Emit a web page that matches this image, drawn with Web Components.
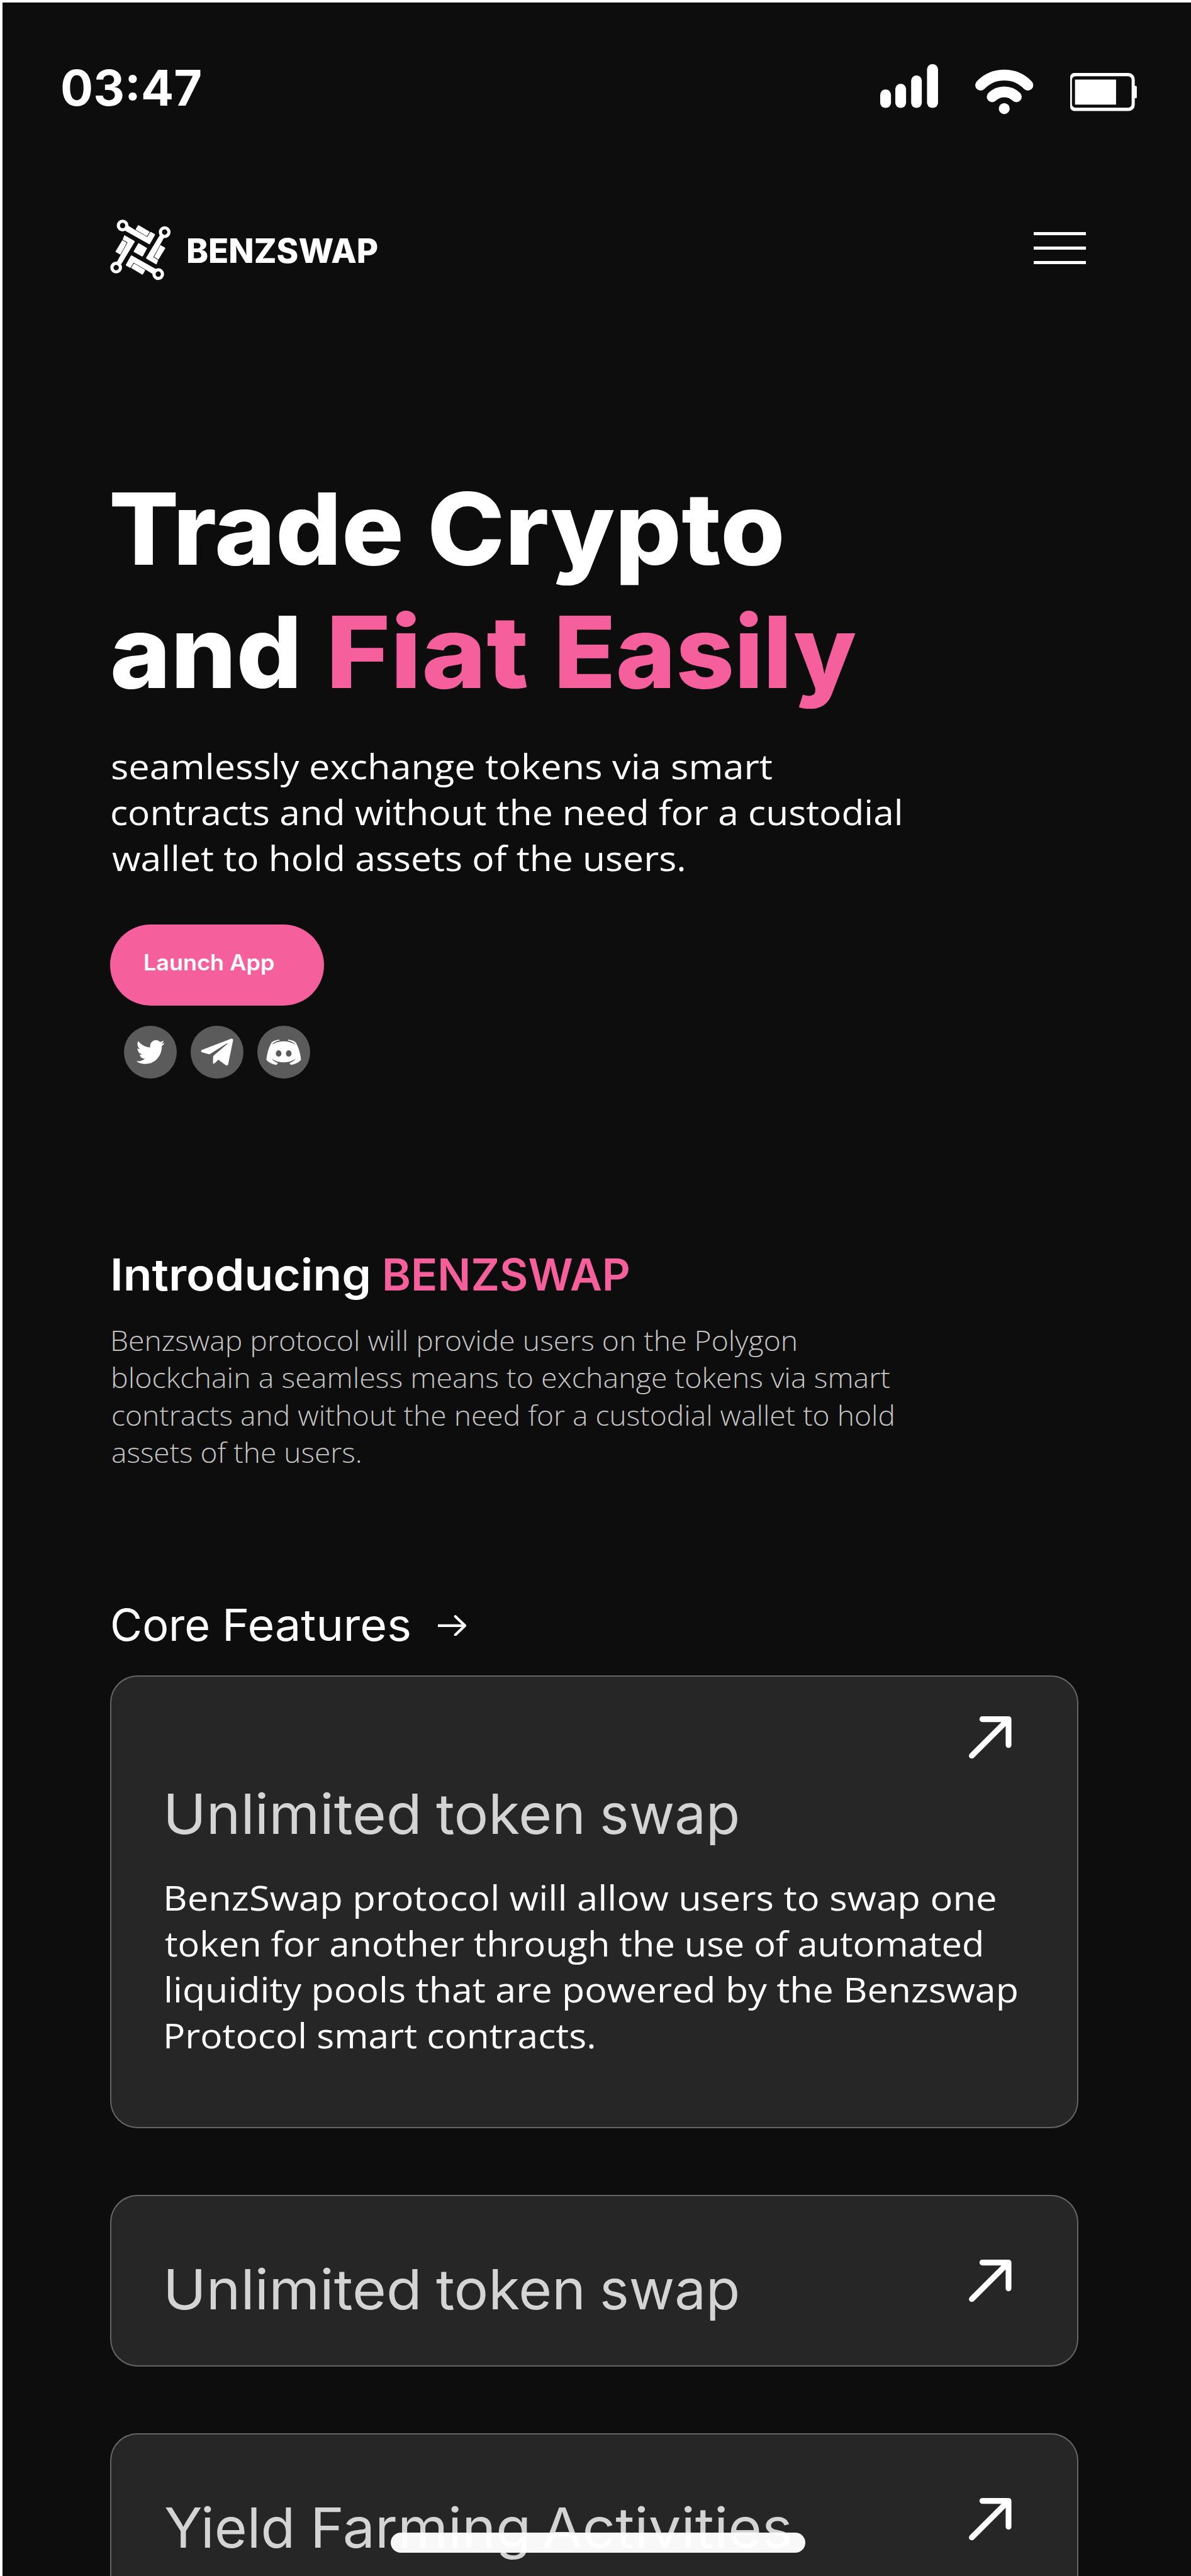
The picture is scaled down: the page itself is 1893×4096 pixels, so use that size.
<!DOCTYPE html>
<html lang="en">
<head>
<meta charset="utf-8">
<title>BENZSWAP</title>
<style>
html { font-size: 7.618px; }
body { margin: 0; background: #0d0d0d; font-family: Inter, "Liberation Sans", sans-serif; color: #fff; }
</style>
</head>
<body>
<benz-app></benz-app>
<script>
const define = (name, html, extra) => {
  const t = document.createElement('template');
  t.innerHTML = html;
  customElements.define(name, class extends HTMLElement {
    connectedCallback() {
      if (!this.shadowRoot) this.attachShadow({ mode: 'open' }).append(t.content.cloneNode(true));
      if (extra) extra(this);
    }
  });
};

/* One run of text whose visible width is given in rem by its "ink" attribute. */
const ctx = document.createElement('canvas').getContext('2d');
define('fit-text', `<style>
:host { display: inline-block; white-space: pre; flex: none; }
:host([line]) { display: block; }
span { display: inline-block; transform-origin: 0 50%; }
</style><span><slot></slot></span>`, el => {
  const cs = getComputedStyle(el), text = el.textContent;
  const rem = parseFloat(getComputedStyle(document.documentElement).fontSize);
  const width = parseFloat(el.getAttribute('ink')) * rem;
  ctx.font = `${cs.fontWeight} ${cs.fontSize} ${cs.fontFamily}`;
  const m = ctx.measureText(text);
  const ink = m.actualBoundingBoxLeft + m.actualBoundingBoxRight;
  const scale = width / ink;
  const span = el.shadowRoot.querySelector('span');
  span.style.transform = `scaleX(${scale})`;
  span.style.marginLeft = m.actualBoundingBoxLeft * scale + 'px';
  el.style.width = width + 'px';
});

define('status-icons', `<style>
:host { display: flex; align-items: flex-start; gap: 7.71rem; }
svg { display: block; overflow: visible; }
.signal { width: 12.07rem; height: 9.14rem; margin-top: .92rem; }
.wifi { width: 12.12rem; height: 9.25rem; margin-top: 2.07rem; }
.battery { width: 13.9rem; height: 7.95rem; margin-top: 2.7rem; }
</style>
<svg class="signal" viewBox="0 0 120.7 91.4" fill="#fff">
<rect x="0" y="53" width="22.5" height="38.4" rx="11"/><rect x="31.5" y="41" width="22.5" height="50.4" rx="11"/>
<rect x="64.6" y="23.6" width="22.2" height="67.8" rx="11"/><rect x="97.7" y="0" width="23" height="91.4" rx="11"/></svg>
<svg class="wifi" viewBox="0 0 121.2 92.5" fill="none" stroke="#fff" stroke-width="22.6" stroke-linecap="round">
<path d="M11.3 32A68.5 68.5 0 0 1 109.9 32M35.4 56.3A36.5 36.5 0 0 1 85.8 56.3"/><circle cx="60.6" cy="81" r="11.4" fill="#fff" stroke="none"/></svg>
<svg class="battery" viewBox="0 0 139 79.5" fill="#fff">
<path fill-rule="evenodd" d="M10 0H121.7A13 13 0 0 1 134.7 13V66.5A13 13 0 0 1 121.7 79.5H10A10 10 0 0 1 0 73V6.5A10 10 0 0 1 10 0ZM11 7A7.5 7.5 0 0 0 3.6 14.5V65A7.5 7.5 0 0 0 11 72.5H121A7.5 7.5 0 0 0 128.2 65V14.5A7.5 7.5 0 0 0 121 7Z"/>
<rect x="10" y="13.8" width="85.7" height="52.3"/><path d="M134 27h3a2 2 0 0 1 2 2v22a2 2 0 0 1-2 2h-3z"/></svg>`);

define('status-bar', `<style>
:host { display: flex; align-items: flex-start; justify-content: space-between; box-sizing: border-box; height: 45rem; padding: 12.48rem 11.3rem 0 12.97rem; }
fit-text { font-size: 10.2rem; line-height: 12rem; font-weight: 650; }
</style><fit-text ink="28.88">03:47</fit-text><status-icons></status-icons>`);

define('brand-logo', `<style>
:host { display: flex; align-items: flex-start; }
svg { display: block; width: 12.65rem; height: 12.67rem; margin-right: 3.65rem; overflow: visible; }
fit-text { font-size: 6.97rem; line-height: 8rem; font-weight: 800; margin-top: 2.7rem; }
</style>
<svg viewBox="76 84 320 380" preserveAspectRatio="none" fill="#fff">
<defs><g id="arms">
<path fill-rule="evenodd" d="M111 122a31 37 0 1 1 62 0a31 37 0 1 1-62 0M128 122a14 17 0 1 0 28 0a14 17 0 1 0-28 0"/>
<path d="M171 122L210 151L272 193L288 162L291 162L312 176L313 181L286 238L283 240L156 155Z"/>
<path d="M223 120L226 119L283 159L284 163L271 188L269 188L212 149L211 145Z"/>
<path fill-rule="evenodd" d="M333 163a31 37 0 1 1 62 0a31 37 0 1 1-62 0M350 163a14 17 0 1 0 28 0a14 17 0 1 0-28 0"/>
<path d="M337 184L266 324L267 329L318 365L321 365L330 338L304 320L361 197Z"/>
<path d="M341 245L344 245L366 260L367 265L332 333L330 334L308 318Z"/>
</g></defs>
<use href="#arms"/><use href="#arms" transform="rotate(180 236 274)"/>
<path d="M225 233L228 233L270 262L271 265L249 313L245 316L201 287L200 284Z"/></svg>
<fit-text ink="39.46">BENZSWAP</fit-text>`);

define('menu-button', `<style>
:host { display: flex; flex-direction: column; justify-content: space-between; width: 10.92rem; height: 6.65rem; }
i { display: block; height: 5px; background: #fff; }
</style><i></i><i></i><i></i>`);

define('site-header', `<style>
:host { display: flex; align-items: flex-start; justify-content: space-between; box-sizing: border-box; height: 50rem; padding: .8rem 21.96rem 0 23rem; }
menu-button { margin-top: 2.68rem; }
</style><brand-logo></brand-logo><menu-button></menu-button>`);

define('launch-button', `<style>
:host { display: block; box-sizing: border-box; width: 44.6rem; height: 16.9rem; border-radius: 8.45rem; background: #f5609c; padding: 5.25rem 0 0 7.18rem; }
fit-text { font-size: 4.62rem; line-height: 5.4rem; font-weight: 600; }
</style><fit-text ink="26.96">Launch App</fit-text>`);

define('social-links', `<style>
:host { display: flex; gap: 2.9rem; }
svg { display: block; width: 11rem; height: 11rem; border-radius: 50%; background: #5b5b5b; fill: #fff; }
</style>
<svg viewBox="132 782 247 330" preserveAspectRatio="none"><path transform="translate(190 872) scale(5.54 7.66) translate(0 -2.3)" d="M23.953 4.57a10 10 0 01-2.825.775 4.958 4.958 0 002.163-2.723c-.951.555-2.005.959-3.127 1.184a4.92 4.92 0 00-8.384 4.482C7.69 8.095 4.067 6.13 1.64 3.162a4.822 4.822 0 00-.666 2.475c0 1.71.87 3.213 2.188 4.096a4.904 4.904 0 01-2.228-.616v.06a4.923 4.923 0 003.946 4.827 4.996 4.996 0 01-2.212.085 4.936 4.936 0 004.604 3.417 9.867 9.867 0 01-6.102 2.105c-.39 0-.779-.023-1.17-.067a13.995 13.995 0 007.557 2.209c9.053 0 13.998-7.496 13.998-13.985 0-.21 0-.42-.015-.63A9.935 9.935 0 0024 4.59z"/></svg>
<svg viewBox="444 782 246 330" preserveAspectRatio="none"><path d="M634 863Q643 863 642 874L619 1024Q616 1034 608 1029L573 995L555 1018Q548 1023 548 1012L549 975Q550 970 553 967L615 896Q617 892 612 893L532 961L497 948Q488 941 496 934Z"/></svg>
<svg viewBox="755 782 246 330" preserveAspectRatio="none">
<path d="M820 889Q831 873 857 869L859 875Q838 880 826 896Q848 879 878 879Q908 879 930 896Q918 880 897 875L899 869Q925 873 936 889Q955 938 959 995Q944 1022 911 1027L905 1015Q924 1008 934 988Q912 1011 878 1011Q844 1011 822 988Q832 1008 851 1015L845 1027Q812 1022 797 995Q801 938 820 889Z"/>
<path d="M825 897Q840 884 859 880M931 897Q916 884 897 880" fill="none" stroke="#5b5b5b" stroke-width="3"/>
<ellipse cx="854.500" cy="956" rx="13" ry="20" fill="#5b5b5b"/><ellipse cx="901.500" cy="956" rx="13" ry="20" fill="#5b5b5b"/></svg>`);

define('hero-section', `<style>
:host { display: flex; flex-direction: column; align-items: flex-start; padding: 2.36rem 0 0 23rem; }
h1 { margin: 0; font-size: 20.83rem; line-height: 25.81rem; font-weight: 800; }
h1 div { display: flex; padding-left: .45rem; }
.pink { color: #f5609c; }
p { margin: 6.05rem 0 9.17rem .35rem; font: 400 7.3rem/9.6rem "Open Sans", sans-serif; }
social-links { margin: 4.17rem 0 0 2.9rem; }
</style>
<h1><div style="gap:6.25rem"><fit-text ink="60.27">Trade</fit-text><fit-text ink="73.1">Crypto</fit-text></div>
<div><fit-text ink="38.4">and</fit-text><fit-text class="pink" ink="40.74" style="margin-left:7.37rem">Fiat</fit-text><fit-text class="pink" ink="61.95" style="margin-left:6.58rem">Easily</fit-text></div></h1>
<p><fit-text line ink="137.7">seamlessly exchange tokens via smart</fit-text><fit-text line ink="164.5">contracts and without the need for a custodial</fit-text><fit-text line ink="119.3">wallet to hold assets of the users.</fit-text></p>
<launch-button></launch-button>
<social-links></social-links>`);

define('intro-section', `<style>
:host { display: block; padding: 35.46rem 0 0 23.68rem; }
h2 { display: flex; gap: 3.46rem; margin: 0; font-size: 9.22rem; line-height: 11rem; font-weight: 600; }
.pink { color: #f5609c; }
p { margin: 4.27rem 0 0 -.2rem; font: 300 5.85rem/7.8rem "Open Sans", sans-serif; color: #c4c4c4; }
</style>
<h2><fit-text ink="53.24">Introducing</fit-text><fit-text class="pink" ink="50.89">BENZSWAP</fit-text></h2>
<p><fit-text line ink="142.5">Benzswap protocol will provide users on the Polygon</fit-text><fit-text line ink="162.1">blockchain a seamless means to exchange tokens via smart</fit-text><fit-text line ink="162.8">contracts and without the need for a custodial wallet to hold</fit-text><fit-text line ink="51.7">assets of the users.</fit-text></p>`);

define('core-title', `<style>
:host { display: flex; align-items: flex-start; margin: 26.7rem 0 4.98rem 23.52rem; font-size: 9.22rem; line-height: 11rem; }
svg { display: block; width: 5.97rem; height: 4.43rem; margin: 3.35rem 0 0 5.97rem; }
</style><fit-text ink="19.98">Core</fit-text><fit-text ink="38.26" style="margin-left:3.6rem">Features</fit-text>
<svg viewBox="0 0 59.7 44.3" fill="none" stroke="#fff" stroke-width="5.6" stroke-linejoin="round" stroke-linecap="round"><path d="M36.500 3L56.500 22.150L36.500 41.300"/><path d="M0 22.150H55" stroke-linecap="butt"/></svg>`);

define('feature-card', `<style>
:host { display: flex; align-items: flex-start; justify-content: space-between; box-sizing: border-box; width: 202.06rem; height: 35.9rem; margin: 0 0 13.85rem 22.98rem; padding: 12.79rem 14.02rem 0 12rem; border-radius: 5.7rem; background: #262626; box-shadow: inset 0 0 0 2px #646464; }
:host([open]) { flex-direction: column-reverse; justify-content: flex-end; height: 94.57rem; padding-top: 8.5rem; }
h3 { display: flex; margin: 0; font-size: 11.59rem; line-height: 14rem; font-weight: 400; color: #d4d4d4; }
:host([open]) h3 { margin-top: 4.56rem; }
svg { display: block; width: 8.87rem; height: 8.84rem; margin-top: .72rem; }
:host([open]) svg { align-self: flex-end; margin: 0; }
div { font: 400 7.3rem/9.6rem "Open Sans", sans-serif; margin: 5.63rem 0 0 -.3rem; }
:host(:not([open])) div { display: none; }
</style><div><slot></slot></div><h3><slot name="title"></slot></h3>
<svg viewBox="0 0 88.7 88.4" fill="none" stroke="#fff" stroke-width="12" stroke-linecap="round" stroke-linejoin="round"><path d="M28 6H82.700V60M82.700 6L6 82.400"/></svg>`);

define('home-indicator', `<style>
:host { display: block; position: absolute; left: 81.47rem; top: 528.58rem; width: 86.52rem; height: 4.19rem; border-radius: 2.1rem; background: rgba(255,255,255,.97); }
</style>`);

define('benz-app', `<style>
:host { display: block; position: relative; width: 100%; height: 4096px; overflow: hidden; background: #0d0d0d; box-shadow: inset 4px 4px 0 #fff; }
</style>
<status-bar></status-bar>
<site-header></site-header>
<hero-section></hero-section>
<intro-section></intro-section>
<core-title></core-title>
<feature-card open>
<fit-text slot="title" ink="52.23">Unlimited</fit-text><fit-text slot="title" ink="30.4" style="margin-left:3.75rem">token</fit-text><fit-text slot="title" ink="28.25" style="margin-left:4.29rem">swap</fit-text>
<fit-text line ink="173">BenzSwap protocol will allow users to swap one</fit-text><fit-text line ink="170.4" style="margin-left:-.35rem">token for another through the use of automated</fit-text><fit-text line ink="177.4">liquidity pools that are powered by the Benzswap</fit-text><fit-text line ink="89.2">Protocol smart contracts.</fit-text>
</feature-card>
<feature-card>
<fit-text slot="title" ink="52.23">Unlimited</fit-text><fit-text slot="title" ink="30.4" style="margin-left:3.75rem">token</fit-text><fit-text slot="title" ink="28.25" style="margin-left:4.29rem">swap</fit-text>
</feature-card>
<feature-card>
<fit-text slot="title" ink="26.25" style="margin-left:-.4rem">Yield</fit-text><fit-text slot="title" ink="44.33" style="margin-left:4.82rem">Farming</fit-text><fit-text slot="title" ink="51.42" style="margin-left:3.48rem">Activities</fit-text>
</feature-card>
<home-indicator></home-indicator>`);
</script>
</body>
</html>
